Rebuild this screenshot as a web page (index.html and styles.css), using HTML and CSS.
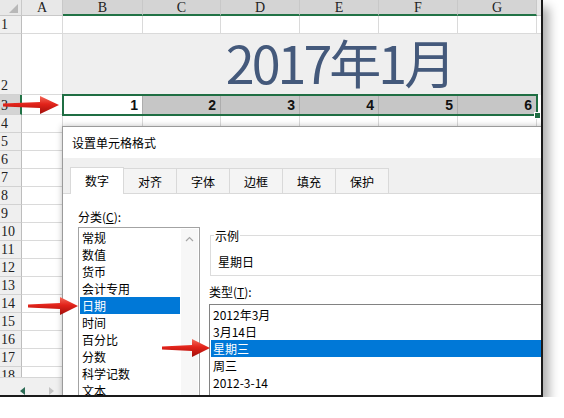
FILE: index.html
```html
<!doctype html>
<html lang="zh-CN">

<head>
    <meta charset="utf-8">
    <title>2017年1月</title>
    <link rel="stylesheet" href="styles.css">
</head>

<body>
    <div class="shot">
        <div class="grid">
            <div class="row hdr">
                <div class="rh corner">
                    <svg width="22" height="15"><polygon points="18,4 18,13 9,13" fill="#b8b8b8"/></svg>
                </div>
                <div class="ca">A</div>
                <div class="cb on">B</div>
                <div class="cc on">C</div>
                <div class="cd on">D</div>
                <div class="ce on">E</div>
                <div class="cf on">F</div>
                <div class="cg on">G</div>
                <div class="rest"></div>
            </div>
            <div class="row r1">
                <div class="rh">1</div><div class="ca"></div><div class="cb"></div><div class="cc"></div><div class="cd"></div><div class="ce"></div><div class="cf"></div><div class="cg"></div><div class="rest"></div>
            </div>
            <div class="row r2">
                <div class="rh">2</div><div class="ca"></div>
                <div class="title">2017年1月</div>
            </div>
            <div class="row r3">
                <div class="rh on">3</div><div class="ca"></div>
                <div class="sel">
                    <div class="cb act">1</div>
                    <div class="cc">2</div>
                    <div class="cd">3</div>
                    <div class="ce">4</div>
                    <div class="cf">5</div>
                    <div class="cg">6</div>
                </div>
                <div class="rest"></div>
            </div>
            <div class="row">
                <div class="rh">4</div><div class="ca"></div><div class="cb"></div><div class="cc"></div><div class="cd"></div><div class="ce"></div><div class="cf"></div><div class="cg"></div><div class="rest"></div>
            </div>
            <div class="row"><div class="rh">5</div><div class="ca"></div><div class="rest"></div></div>
            <div class="row"><div class="rh">6</div><div class="ca"></div><div class="rest"></div></div>
            <div class="row"><div class="rh">7</div><div class="ca"></div><div class="rest"></div></div>
            <div class="row"><div class="rh">8</div><div class="ca"></div><div class="rest"></div></div>
            <div class="row"><div class="rh">9</div><div class="ca"></div><div class="rest"></div></div>
            <div class="row"><div class="rh">10</div><div class="ca"></div><div class="rest"></div></div>
            <div class="row"><div class="rh">11</div><div class="ca"></div><div class="rest"></div></div>
            <div class="row"><div class="rh">12</div><div class="ca"></div><div class="rest"></div></div>
            <div class="row"><div class="rh">13</div><div class="ca"></div><div class="rest"></div></div>
            <div class="row"><div class="rh">14</div><div class="ca"></div><div class="rest"></div></div>
            <div class="row"><div class="rh">15</div><div class="ca"></div><div class="rest"></div></div>
            <div class="row"><div class="rh">16</div><div class="ca"></div><div class="rest"></div></div>
            <div class="row"><div class="rh">17</div><div class="ca"></div><div class="rest"></div></div>
            <div class="row"><div class="rh">18</div><div class="ca"></div><div class="rest"></div></div>
        </div>

        <div class="sheetbar">
            <span class="nav prev"></span>
            <span class="nav next"></span>
        </div>

        <!-- format cells dialog -->
        <div class="dialog">
            <div class="dlg-title">设置单元格格式</div>
            <div class="tabs">
                <div class="tab active">数字</div>
                <div class="tab">对齐</div>
                <div class="tab">字体</div>
                <div class="tab">边框</div>
                <div class="tab">填充</div>
                <div class="tab">保护</div>
            </div>
            <div class="dlg-body">
                <div class="cat">
                    <div class="label">分类(<u>C</u>):</div>
                    <div class="list catlist">
                        <div class="items">
                            <div>常规</div>
                            <div>数值</div>
                            <div>货币</div>
                            <div>会计专用</div>
                            <div class="picked">日期</div>
                            <div>时间</div>
                            <div>百分比</div>
                            <div>分数</div>
                            <div>科学记数</div>
                            <div>文本</div>
                        </div>
                        <div class="vscroll">
                            <svg width="9" height="6"><polyline points="1,5 4.5,1.5 8,5" fill="none" stroke="#a6a6a6" stroke-width="1.2"/></svg>
                        </div>
                    </div>
                </div>
                <div class="fmt">
                    <fieldset class="sample">
                        <legend>示例</legend>
                        <div>星期日</div>
                    </fieldset>
                    <div class="label">类型(<u>T</u>):</div>
                    <div class="list typelist">
                        <div>2012年3月</div>
                        <div>3月14日</div>
                        <div class="picked">星期三</div>
                        <div>周三</div>
                        <div>2012-3-14</div>
                        <div>2012/3/14 1:30 PM</div>
                    </div>
                </div>
            </div>
        </div>

        <!-- red pointer arrows -->
        <svg class="arrow a1" width="57" height="20">
            <defs>
                <linearGradient id="red" x1="0" y1="0" x2="0" y2="1">
                    <stop offset="0" stop-color="#f36a5a"/>
                    <stop offset="0.45" stop-color="#e2231a"/>
                    <stop offset="1" stop-color="#a10f0b"/>
                </linearGradient>
            </defs>
            <polygon points="0,8.5 37,7 37,1 56,10 37,19 37,13 0,11.5" fill="url(#red)"/>
        </svg>
        <svg class="arrow a2" width="51" height="20">
            <polygon points="0,8.5 32,7 32,1 50,10 32,19 32,13 0,11.5" fill="url(#red)"/>
        </svg>
        <svg class="arrow a3" width="49" height="20">
            <polygon points="0,8.5 30,7 30,1 48,10 30,19 30,13 0,11.5" fill="url(#red)"/>
        </svg>
    </div>
</body>

</html>
```

FILE: styles.css
```css
body {
    margin: 0;
    background: #fff;
}

.shot {
    position: relative;
    width: 541px;
    height: 395px;
    display: flex;
    flex-direction: column;
    overflow: hidden;
    background: #fff;
    border-right: 2px solid #1a1a1a;
    border-bottom: 2px solid #1a1a1a;
    box-shadow: 6px 7px 10px rgba(0, 0, 0, 0.32);
    font-family: "Liberation Serif", serif;
}

/* spreadsheet */
.grid {
    height: 377px;
    overflow: hidden;
}

.row {
    display: flex;
    height: 18px;
}

.row > div {
    flex: none;
    box-sizing: border-box;
    border-right: 1px solid #dadada;
    border-bottom: 1px solid #dadada;
}

.row > .rest {
    flex: 1;
    border-right: none;
}

.rh { width: 22px; }
.ca { width: 41px; }
.cb { width: 80px; }
.cc { width: 78px; }
.cd, .ce, .cf, .cg { width: 79px; }

.row > .rh {
    display: flex;
    align-items: flex-end;
    padding-left: 1px;
    background: #efefef;
    border-right-color: #bdbdbd;
    border-bottom-color: #d2d2d2;
    font-size: 14px;
    line-height: 17px;
    color: #222;
}

.hdr {
    height: 16px;
}

.row.hdr > div {
    background: #e8e8e8;
    border-color: #c8c8c8;
    text-align: center;
    font-size: 14px;
    line-height: 15px;
    color: #222;
}

.row.hdr > .on {
    background: #d4d4d4;
    border-bottom: 2px solid #217346;
}

.row.hdr > .corner {
    padding: 0;
    background: #e8e8e8;
}

.r2 {
    height: 61px;
}

.row > .title {
    width: 553px;
    overflow: hidden;
    background: #efefef;
    border: none;
    text-align: center;
    font-family: "Noto Sans CJK SC", sans-serif;
    font-size: 52px;
    line-height: 56px;
    letter-spacing: -3px;
    color: #44597b;
}

.r3 {
    height: 20px;
}

.row > .rh.on {
    background: #d4d4d4;
    border-right: 2px solid #217346;
}

.row > .sel {
    position: relative;
    display: flex;
    width: 474px;
    border: none;
    outline: 2px solid #1f6e43;
    outline-offset: -1px;
}

.sel > div {
    flex: none;
    box-sizing: border-box;
    background: #c6c6c6;
    border-right: 1px solid #adadad;
    padding-right: 4px;
    text-align: right;
    font-family: "Liberation Sans", sans-serif;
    font-weight: bold;
    font-size: 14px;
    line-height: 20px;
    color: #111;
}

.sel > .act {
    background: #fff;
}

.sel::after {
    content: "";
    position: absolute;
    right: -4px;
    bottom: -4px;
    width: 5px;
    height: 5px;
    background: #1f6e43;
    border: 1px solid #fff;
}

.sheetbar {
    height: 18px;
    display: flex;
    align-items: center;
    gap: 24px;
    padding-left: 20px;
    background: #f0f0f0;
    border-top: 1px solid #d6d6d6;
    box-sizing: border-box;
}

.nav {
    width: 0;
    height: 0;
    border-top: 4px solid transparent;
    border-bottom: 4px solid transparent;
    margin-top: 8px;
}

.nav.prev { border-right: 5px solid #2c6b55; }
.nav.next { border-left: 5px solid #c4c4c4; }

/* format cells dialog */
.dialog {
    position: absolute;
    left: 62px;
    top: 126px;
    width: 540px;
    height: 300px;
    background: #fff;
    border: 1px solid #9b9b9b;
    box-shadow: 0 0 6px rgba(0, 0, 0, 0.25);
    font-family: "Noto Sans CJK SC", sans-serif;
    font-size: 12px;
    color: #000;
}

.dlg-title {
    height: 31px;
    line-height: 31px;
    padding-left: 9px;
}

.tabs {
    display: flex;
    align-items: flex-end;
    height: 36px;
    box-sizing: border-box;
    padding: 9px 0 0 7px;
    background: #f0f0f0;
    border-bottom: 1px solid #d9d9d9;
}

.tab {
    width: 54px;
    height: 25px;
    line-height: 25px;
    margin-right: -1px;
    box-sizing: border-box;
    text-align: center;
    background: #f4f4f4;
    border: 1px solid #d9d9d9;
    border-bottom: none;
}

.tab.active {
    height: 27px;
    margin-bottom: -1px;
    background: #fff;
}

.dlg-body {
    display: flex;
    gap: 9px;
    padding: 14px 0 0 15px;
}

.cat {
    flex: none;
    width: 122px;
}

.label {
    height: 18px;
    line-height: 18px;
}

.list {
    background: #fff;
    border: 1px solid #a3a3a3;
    box-sizing: border-box;
    padding: 1px;
}

.catlist {
    display: flex;
    gap: 1px;
    height: 200px;
    margin-top: 1px;
}

.catlist .items {
    width: 101px;
}

.items > div,
.typelist > div {
    height: 17px;
    line-height: 17px;
    padding-left: 2px;
    white-space: nowrap;
}

.picked {
    background: #0078d7;
    color: #fff;
}

.vscroll {
    width: 17px;
    display: flex;
    justify-content: center;
    padding-top: 7px;
    box-sizing: border-box;
    background: #f7f7f7;
}

.fmt {
    flex: 1;
    min-width: 0;
}

.sample {
    margin: 19px 0 0 1px;
    padding: 0 0 4px 3px;
    min-width: 0;
    border: 1px solid #dcdcdc;
}

.sample legend {
    padding: 0 1px;
    line-height: 17px;
}

.sample div {
    margin-top: 9px;
    padding-left: 4px;
    line-height: 18px;
}

.fmt .label {
    margin-top: 7px;
}

.typelist {
    height: 120px;
    margin-top: 3px;
    border-color: #828282;
}

/* arrows */
.arrow {
    position: absolute;
}

.a1 { left: 3px; top: 95px; }
.a2 { left: 28px; top: 296px; }
.a3 { left: 162px; top: 338px; }
```
